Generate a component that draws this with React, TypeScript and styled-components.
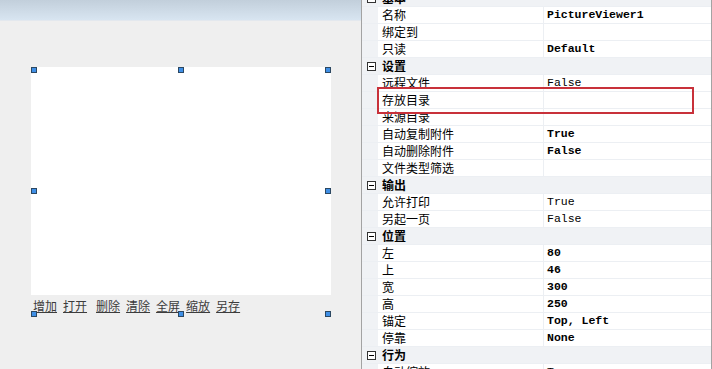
import React from 'react';
import styled, { createGlobalStyle } from 'styled-components';

type Prop = { name: string; value?: string; bold?: boolean };
type Section = { title: string; items: Prop[] };

const sections: Section[] = [
  {
    title: '基本',
    items: [
      { name: '名称', value: 'PictureViewer1', bold: true },
      { name: '绑定到' },
      { name: '只读', value: 'Default', bold: true },
    ],
  },
  {
    title: '设置',
    items: [
      { name: '远程文件', value: 'False' },
      { name: '存放目录' },
      { name: '来源目录' },
      { name: '自动复制附件', value: 'True', bold: true },
      { name: '自动删除附件', value: 'False', bold: true },
      { name: '文件类型筛选' },
    ],
  },
  {
    title: '输出',
    items: [
      { name: '允许打印', value: 'True' },
      { name: '另起一页', value: 'False' },
    ],
  },
  {
    title: '位置',
    items: [
      { name: '左', value: '80', bold: true },
      { name: '上', value: '46', bold: true },
      { name: '宽', value: '300', bold: true },
      { name: '高', value: '250', bold: true },
      { name: '锚定', value: 'Top, Left', bold: true },
      { name: '停靠', value: 'None', bold: true },
    ],
  },
  {
    title: '行为',
    items: [{ name: '自动缩放', value: 'True' }],
  },
];

const links = ['增加', '打开', '删除', '清除', '全屏', '缩放', '另存'];

const handles: { top?: number; bottom?: number; left?: number; right?: number }[] = [
  { top: 0, left: 0 },
  { top: 0, left: 147 },
  { top: 0, right: 0 },
  { top: 121, left: 0 },
  { top: 121, right: 0 },
  { bottom: 0, left: 0 },
  { bottom: 0, left: 147 },
  { bottom: 0, right: 0 },
];

const App = () => {
  return (
    <>
      <GlobalStyle />
      <Page>
        <Designer>
          <TitleBand />
          <Canvas>
            <PictureViewer>
              <Surface />
              <LinkBar>
                {links.map((l) => (
                  <Link key={l} wide={l === '删除'}>
                    {l}
                  </Link>
                ))}
              </LinkBar>
              {handles.map((h, i) => (
                <Handle key={i} {...h} />
              ))}
            </PictureViewer>
          </Canvas>
        </Designer>

        <PropertyGrid>
          <Rows>
            {sections.map((s) => (
              <React.Fragment key={s.title}>
                <HeaderRow>
                  <Gutter>
                    <Toggle>
                      <svg width="9" height="9" viewBox="0 0 9 9">
                        <rect x="0.5" y="0.5" width="8" height="8" fill="#fff" stroke="#333" />
                        <line x1="2" y1="4.5" x2="7" y2="4.5" stroke="#000" />
                      </svg>
                    </Toggle>
                  </Gutter>
                  <HeaderTitle>{s.title}</HeaderTitle>
                </HeaderRow>
                {s.items.map((p) => (
                  <ItemRow key={p.name}>
                    <Gutter />
                    <NameCell>{p.name}</NameCell>
                    <ValueCell bold={p.bold}>{p.value}</ValueCell>
                  </ItemRow>
                ))}
              </React.Fragment>
            ))}
          </Rows>
          <Highlight />
        </PropertyGrid>
      </Page>
    </>
  );
};

export default App;

const GlobalStyle = createGlobalStyle`
  html, body {
    margin: 0;
    padding: 0;
    background: #efefef;
  }
  body {
    font-family: "Noto Sans CJK SC", "Liberation Sans", sans-serif;
    font-size: 12px;
    color: #000;
  }
`;

const Page = styled.div`
  display: flex;
  width: 712px;
  height: 369px;
  overflow: hidden;
`;

const Designer = styled.div`
  width: 361px;
  flex-shrink: 0;
  display: flex;
  flex-direction: column;
  background: #efefef;
  border-right: 1px solid #a3a3a3;
`;

const TitleBand = styled.div`
  height: 20px;
  background: linear-gradient(to bottom, #c2cfdb, #d8e5f1);
  border-bottom: 1px solid #e3e8ee;
`;

const Canvas = styled.div`
  flex: 1;
  padding: 46px 0 0 31px;
`;

const PictureViewer = styled.div`
  position: relative;
  width: 300px;
  height: 250px;
`;

const Surface = styled.div`
  height: 228px;
  background: #fff;
`;

const LinkBar = styled.div`
  display: flex;
  gap: 6px;
  margin-top: 3px;
  padding-left: 2px;
  line-height: 16px;
`;

const Link = styled.span<{ wide?: boolean }>`
  color: #3c3c3c;
  text-decoration: underline;
  text-underline-offset: 1px;
  margin-left: ${({ wide }) => (wide ? '3px' : '0')};
`;

const Handle = styled.div<{ top?: number; bottom?: number; left?: number; right?: number }>`
  position: absolute;
  width: 4px;
  height: 4px;
  background: #3f8fe6;
  border: 1px solid #2c4862;
  ${({ top }) => (top !== undefined ? `top: ${top}px;` : '')}
  ${({ bottom }) => (bottom !== undefined ? `bottom: ${bottom}px;` : '')}
  ${({ left }) => (left !== undefined ? `left: ${left}px;` : '')}
  ${({ right }) => (right !== undefined ? `right: ${right}px;` : '')}
`;

const PropertyGrid = styled.div`
  position: relative;
  flex: 1;
  background: #fff;
  border-right: 1px solid #a3a3a3;
  overflow: hidden;
`;

const Rows = styled.div`
  margin-top: -10px;
`;

const RowBase = styled.div`
  display: grid;
  grid-template-columns: 16px 166px 1fr;
  height: 16px;
  line-height: 16px;
  border-bottom: 1px solid #eceff3;
`;

const HeaderRow = styled(RowBase)`
  background: #f0f2f5;
`;

const ItemRow = styled(RowBase)`
  background: #fff;
`;

const Gutter = styled.div`
  background: #f0f2f5;
  display: flex;
  align-items: center;
  padding-left: 5px;
`;

const Toggle = styled.span`
  display: flex;
  width: 9px;
  height: 9px;
`;

const HeaderTitle = styled.div`
  grid-column: 2 / 4;
  padding-left: 4px;
  font-weight: bold;
`;

const NameCell = styled.div`
  padding-left: 4px;
  border-right: 1px solid #eceff3;
  white-space: nowrap;
  overflow: hidden;
`;

const ValueCell = styled.div<{ bold?: boolean }>`
  padding-left: 3px;
  font-family: "Liberation Mono", "DejaVu Sans Mono", monospace;
  font-size: 11.5px;
  font-weight: ${({ bold }) => (bold ? 'bold' : 'normal')};
  white-space: pre;
`;

const Highlight = styled.div`
  position: absolute;
  left: 15px;
  top: 87px;
  width: 313px;
  height: 23px;
  border: 2px solid #c8313a;
  pointer-events: none;
`;
